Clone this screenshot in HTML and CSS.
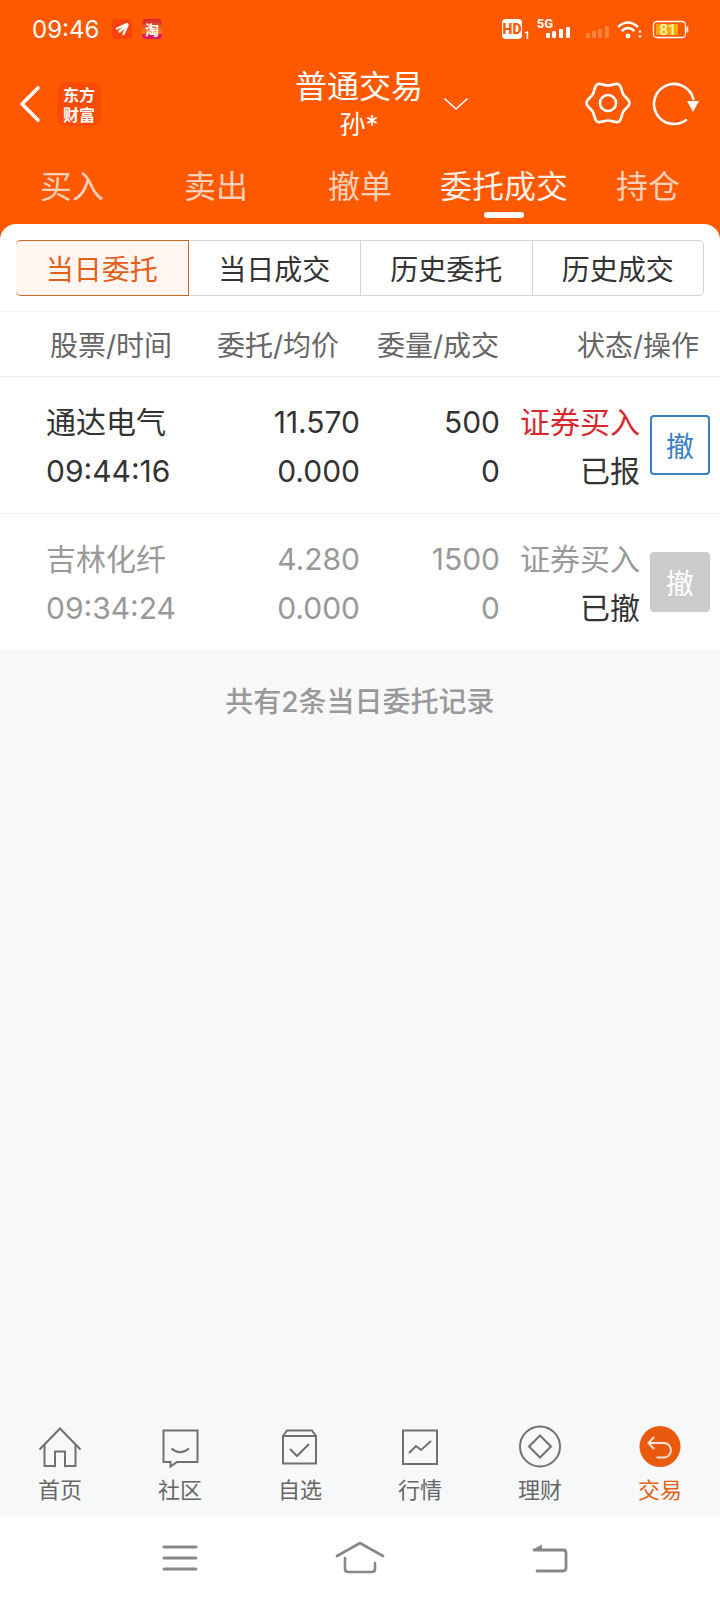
FILE: index.html
```html
<!DOCTYPE html>
<html lang="zh-CN">
<head>
  <meta charset="UTF-8">
  <meta name="viewport" content="width=device-width, initial-scale=1.0">
  <title>普通交易</title>
  <link rel="stylesheet" href="styles.css">
</head>
<body>

  <header class="topArea">
    <div class="statusBar">
      <span class="statusBar__time">09:46</span>
      <span class="appDot appDot--plane">
        <svg width="20" height="20" viewBox="0 0 20 20"><path d="M5 9.500 L15 5 M7.500 12.500 L15.500 5.500 M11.500 15 L15.500 6" fill="none" stroke="#fff" stroke-width="2.400" stroke-linecap="round"/></svg>
      </span>
      <span class="appDot appDot--tao">淘</span>
      <svg class="statusBar__icons" width="190" height="28" viewBox="0 -2 190 28">
        <rect x="2" y="2" width="20" height="20" rx="4" fill="#fff"/>
        <text x="12" y="17" class="sysText sysText--hd">HD</text>
        <text x="27" y="22" class="sysText sysText--sim">1</text>
        <text x="45" y="11" class="sysText sysText--net">5G</text>
        <g fill="#fff">
          <rect x="46" y="16" width="4" height="5" rx="1"/>
          <rect x="52" y="14" width="4" height="7" rx="1"/>
          <rect x="59" y="12" width="4" height="9" rx="1"/>
          <rect x="66" y="10" width="4" height="11" rx="1"/>
        </g>
        <g fill="#fff" opacity=".25">
          <rect x="86" y="16" width="4" height="5" rx="1"/>
          <rect x="92" y="14" width="4" height="7" rx="1"/>
          <rect x="98" y="12" width="4" height="9" rx="1"/>
          <rect x="105" y="9" width="4" height="12" rx="1"/>
        </g>
        <g fill="none" stroke="#fff" stroke-width="2.600">
          <path d="M118 10 Q128 1 138 10"/>
          <path d="M121.500 14 Q128 8 134.500 14"/>
        </g>
        <circle cx="128" cy="19" r="2.400" fill="#fff"/>
        <path d="M140 13 L142 15.500 H138 Z M140 21 L142 18.500 H138 Z" fill="#fff"/>
        <rect x="153.500" y="4.500" width="32" height="16" rx="3.500" fill="none" stroke="#fff" stroke-width="1.300"/>
        <rect x="156" y="7" width="22" height="11" fill="#ffaa00"/>
        <rect x="186.500" y="9.500" width="1.800" height="6" rx=".9" fill="#fff"/>
        <text x="168" y="18" class="sysText sysText--batt">81</text>
      </svg>
    </div>

    <div class="titleBar">
      <div class="titleBar__left">
        <svg width="24" height="40" viewBox="0 0 24 40"><path d="M20 4 L4 20 L20 36" fill="none" stroke="#fff" stroke-width="3.600" stroke-linecap="round" stroke-linejoin="round"/></svg>
        <div class="brandLogo">东方<br>财富</div>
      </div>
      <div class="titleBar__center">
        <div class="titleBar__title">普通交易</div>
        <div class="titleBar__user">孙*</div>
      </div>
      <div class="titleBar__right">
        <svg class="titleBar__arrow" width="26" height="14" viewBox="0 0 26 14"><path d="M1.500 1.500 L13 12 L24.500 1.500" fill="none" stroke="#fff" stroke-width="1.600"/></svg>
        <svg class="titleBar__gear" width="48" height="48" viewBox="0 0 48 48">
          <g fill="none" stroke="#fff" stroke-width="2.600">
            <path transform="rotate(30 24 24)" d="M41.500 24 C41.500 20.500 44.370 16.280 42.620 13.250 S35.780 10.590 32.750 8.840 S27.500 2.500 24 2.500 S18.280 7.090 15.250 8.840 S7.130 10.220 5.380 13.250 S6.500 20.500 6.500 24 S3.630 31.720 5.380 34.750 S12.220 37.410 15.250 39.160 S20.500 45.500 24 45.500 S29.720 40.910 32.750 39.160 S40.870 37.780 42.620 34.750 S41.500 27.500 41.500 24 Z"/>
            <circle cx="24" cy="24" r="8"/>
          </g>
        </svg>
        <svg width="50" height="48" viewBox="0 0 50 48">
          <path d="M43.400 19 A20 20 0 1 0 36 40" fill="none" stroke="#fff" stroke-width="2.600" stroke-linecap="round"/>
          <path d="M37 21 H49 L43 32 Z" fill="#fff"/>
        </svg>
      </div>
    </div>

    <nav class="mainTabs">
      <span class="mainTabs__item">买入</span>
      <span class="mainTabs__item">卖出</span>
      <span class="mainTabs__item">撤单</span>
      <span class="mainTabs__item mainTabs__item--active">委托成交</span>
      <span class="mainTabs__item">持仓</span>
    </nav>
  </header>

  <main class="sheet">
    <div class="segmentWrap">
      <div class="segment">
        <span class="segment__item segment__item--active">当日委托</span>
        <span class="segment__item">当日成交</span>
        <span class="segment__item">历史委托</span>
        <span class="segment__item">历史成交</span>
      </div>
    </div>

    <div class="listHead">
      <span>股票/时间</span>
      <span class="listHead__right">委托/均价</span>
      <span class="listHead__right">委量/成交</span>
      <span class="listHead__right">状态/操作</span>
    </div>

    <div class="orderRow">
      <div class="orderRow__cell orderRow__cell--name"><span>通达电气</span><span>09:44:16</span></div>
      <div class="orderRow__cell"><span>11.570</span><span>0.000</span></div>
      <div class="orderRow__cell"><span>500</span><span>0</span></div>
      <div class="orderRow__cell"><span class="buyText">证券买入</span><span>已报</span></div>
      <button type="button" class="cancelBtn">撤</button>
    </div>

    <div class="orderRow orderRow--done">
      <div class="orderRow__cell orderRow__cell--name"><span>吉林化纤</span><span>09:34:24</span></div>
      <div class="orderRow__cell"><span>4.280</span><span>0.000</span></div>
      <div class="orderRow__cell"><span>1500</span><span>0</span></div>
      <div class="orderRow__cell"><span>证券买入</span><span class="stateText">已撤</span></div>
      <button type="button" class="cancelBtn cancelBtn--off" disabled>撤</button>
    </div>

    <p class="recordCount">共有2条当日委托记录</p>
  </main>

  <footer class="tabBar">
    <div class="tabBar__item">
      <svg width="44" height="44" viewBox="0 0 44 44"><path class="tabStroke" d="M1.500 24.500 L22 3.500 L42.500 24.500 M6.500 19.500 V41 H17 V26.500 H27 V41 H37.500 V19.500"/></svg>
      <span>首页</span>
    </div>
    <div class="tabBar__item">
      <svg width="44" height="44" viewBox="0 0 44 44"><path class="tabStroke" d="M5.500 5.500 H39.500 V37 H19 L12.500 41.500 V37 H5.500 Z M13.500 23.500 Q22 31 31 23.500"/></svg>
      <span>社区</span>
    </div>
    <div class="tabBar__item">
      <svg width="44" height="44" viewBox="0 0 44 44"><path class="tabStroke" d="M5 11 L9 5.500 H34 L38 11 M5 11 H38 V38.500 H5 Z M12 24 L19 31 L31 19"/></svg>
      <span>自选</span>
    </div>
    <div class="tabBar__item">
      <svg width="44" height="44" viewBox="0 0 44 44"><path class="tabStroke" d="M5 5.500 H39 V39 H5 Z M11 28 L18 21 L23 25 L33 16"/></svg>
      <span>行情</span>
    </div>
    <div class="tabBar__item">
      <svg width="44" height="44" viewBox="0 0 44 44"><circle class="tabStroke" cx="22" cy="21.500" r="20"/><path class="tabStroke" d="M22 10.500 L33 21.500 L22 32.500 L11 21.500 Z"/></svg>
      <span>理财</span>
    </div>
    <div class="tabBar__item tabBar__item--active">
      <svg width="44" height="44" viewBox="0 0 44 44"><circle cx="22" cy="21.500" r="20.500" fill="#ea5a0c"/><path d="M16 12 L10.500 18 L16 24 M11 18 H26.500 A7.300 7.300 0 0 1 26.500 32.500 H18.500" fill="none" stroke="#fde6d8" stroke-width="2"/></svg>
      <span>交易</span>
    </div>
  </footer>

  <div class="sysNav">
    <svg width="36" height="28" viewBox="0 0 36 28"><path d="M2 3 H34 M2 14 H34 M2 25 H34" fill="none" stroke="#888" stroke-width="3" stroke-linecap="round"/></svg>
    <svg class="sysNav__home" width="50" height="34" viewBox="0 0 50 34"><path d="M2 15 L25 2 L48 15 M10 17 V28 Q10 31 13 31 H37 Q40 31 40 28 V22" fill="none" stroke="#888" stroke-width="2.600" stroke-linecap="round"/></svg>
    <svg class="sysNav__back" width="38" height="30" viewBox="0 0 38 30"><path d="M2 7 L12 1.500 V7 Z" fill="#888"/><path d="M4 7 H33 Q36 7 36 10 V25 Q36 28 33 28 H7" fill="none" stroke="#888" stroke-width="2.800" stroke-linecap="round"/></svg>
  </div>

</body>
</html>
```

FILE: styles.css
```css
* {
  box-sizing: border-box;
  padding: 0;
  margin: 0;
}
body {
  display: flex;
  flex-direction: column;
  width: 720px;
  height: 1600px;
  overflow: hidden;
  background-color: #f7f8fa;
  font-family: Inter, "Noto Sans CJK SC", sans-serif;
  color: #333;
}
.topArea {
  height: 240px;
  flex-shrink: 0;
  background-color: #ff5900;
  color: #fff;
}
/* status bar */
.statusBar {
  display: flex;
  align-items: center;
  height: 58px;
  padding-left: 32px;
}
.statusBar__time {
  font-size: 24px;
  font-weight: 400;
  width: 80px;
}
.appDot {
  display: flex;
  align-items: center;
  justify-content: center;
  width: 20px;
  height: 20px;
  border-radius: 4px;
}
.appDot--plane {
  background-color: #f8430e;
  margin-right: 10px;
}
.appDot--tao {
  background: linear-gradient(#d9202f 0, #f08a1c 72%, #e0195a 74%);
  font-size: 14px;
  font-weight: 700;
  color: #fff;
}
.statusBar__icons {
  margin-left: auto;
  margin-right: 30px;
}
.sysText {
  font-family: Roboto, sans-serif;
  fill: #fff;
  text-anchor: middle;
}
.sysText--hd {
  font-size: 14px;
  font-weight: 900;
  fill: #ff5900;
}
.sysText--sim {
  font-size: 10px;
  font-weight: 700;
}
.sysText--net {
  font-size: 13px;
  font-weight: 700;
}
.sysText--batt {
  font-size: 15px;
  font-weight: 500;
  fill: #fff6c0;
}
/* title bar */
.titleBar {
  display: grid;
  grid-template-columns: 1fr 130px 1fr;
  height: 92px;
  padding: 0 20px 0 18px;
}
.titleBar__left {
  display: flex;
  align-items: center;
  gap: 15px;
}
.brandLogo {
  width: 44px;
  height: 44px;
  border-radius: 10px;
  background-color: #fa4a08;
  font-family: "Noto Sans CJK SC", serif;
  font-size: 16px;
  font-weight: 700;
  line-height: 20px;
  text-align: center;
  padding-top: 2px;
}
.titleBar__center {
  display: flex;
  flex-direction: column;
  align-items: center;
  padding-top: 10px;
}
.titleBar__title {
  font-size: 32px;
  line-height: 38px;
  white-space: nowrap;
}
.titleBar__user {
  font-size: 26px;
  line-height: 38px;
}
.titleBar__right {
  display: flex;
  align-items: center;
}
.titleBar__arrow {
  margin-left: 19px;
}
.titleBar__gear {
  margin-left: auto;
  margin-right: 18px;
  margin-bottom: 2px;
}
/* top tabs */
.mainTabs {
  display: grid;
  grid-template-columns: repeat(5, 144px);
  height: 74px;
  padding-top: 14px;
}
.mainTabs__item {
  position: relative;
  text-align: center;
  font-size: 32px;
  line-height: 46px;
  color: rgba(255, 255, 255, .72);
}
.mainTabs__item--active {
  color: rgba(255, 255, 255, .92);
}
.mainTabs__item--active::after {
  content: "";
  position: absolute;
  left: 52px;
  bottom: 6px;
  width: 40px;
  height: 6px;
  border-radius: 3px;
  background-color: #fff;
}
/* white sheet pulled up over the header */
.sheet {
  flex-grow: 1;
  margin-top: -16px;
}
.segmentWrap {
  background-color: #fff;
  padding: 16px 16px 15px;
  border-radius: 16px 16px 0 0;
  border-bottom: 1px solid #f0f0f0;
}
.segment {
  display: grid;
  grid-template-columns: repeat(4, 1fr);
  height: 56px;
  border: 1px solid #d4d4d4;
  border-radius: 5px;
}
.segment__item {
  display: flex;
  align-items: center;
  justify-content: center;
  font-size: 28px;
  color: #333;
  border-left: 1px solid #d4d4d4;
}
.segment__item:first-child {
  border-left: none;
}
.segment__item--active {
  margin: -1px 0 -1px -1px;
  border: 1px solid #c96a2c;
  border-radius: 5px 0 0 5px;
  background-color: #fff6f1;
  color: #e2601a;
}
.segment__item--active + .segment__item {
  border-left: none;
}
.listHead {
  display: grid;
  grid-template-columns: 165px 124px 160px 200px;
  align-items: center;
  height: 65px;
  padding-left: 50px;
  background-color: #fff;
  border-bottom: 1px solid #ececec;
  font-size: 28px;
  color: #666;
}
.listHead__right {
  text-align: right;
  white-space: nowrap;
}
/* order rows */
.orderRow {
  display: grid;
  grid-template-columns: 170px 144px 140px 140px 60px;
  align-items: center;
  height: 137px;
  padding-left: 46px;
  background-color: #fff;
  border-bottom: 1px solid #ececec;
  color: #333;
}
.orderRow--done {
  border-bottom: none;
  height: 136px;
  color: #999;
}
.orderRow__cell {
  display: flex;
  flex-direction: column;
  padding-top: 4px;
  text-align: right;
  font-size: 30px;
  line-height: 49px;
  white-space: nowrap;
}
.orderRow__cell--name {
  text-align: left;
}
.buyText {
  color: #d9272e;
}
.stateText {
  color: #333;
}
.cancelBtn {
  width: 60px;
  height: 60px;
  margin-left: 10px;
  border: 2px solid #3a7fc4;
  border-radius: 4px;
  background-color: #fff;
  color: #3a7fc4;
  font-family: "Noto Sans CJK SC", sans-serif;
  font-size: 28px;
}
.cancelBtn--off {
  border-color: #ccc;
  background-color: #ccc;
  color: #fff;
}
.recordCount {
  padding-top: 30px;
  text-align: center;
  font-size: 28px;
  font-weight: 500;
  color: #999;
}
/* bottom tabs */
.tabBar {
  display: grid;
  grid-template-columns: repeat(6, 120px);
  height: 91px;
  flex-shrink: 0;
  background-color: #f7f8fa;
}
.tabBar__item {
  display: flex;
  flex-direction: column;
  align-items: center;
  font-size: 22px;
  line-height: 30px;
  color: #666;
}
.tabBar__item svg {
  display: block;
  margin-bottom: 6px;
}
.tabBar__item--active {
  color: #e2601a;
}
.tabStroke {
  fill: none;
  stroke: #707070;
  stroke-width: 2;
}
.sysNav {
  display: flex;
  align-items: center;
  height: 84px;
  padding-left: 162px;
  flex-shrink: 0;
  background-color: #fff;
}
.sysNav__home {
  margin-left: 137px;
}
.sysNav__back {
  margin-left: 145px;
}
```
